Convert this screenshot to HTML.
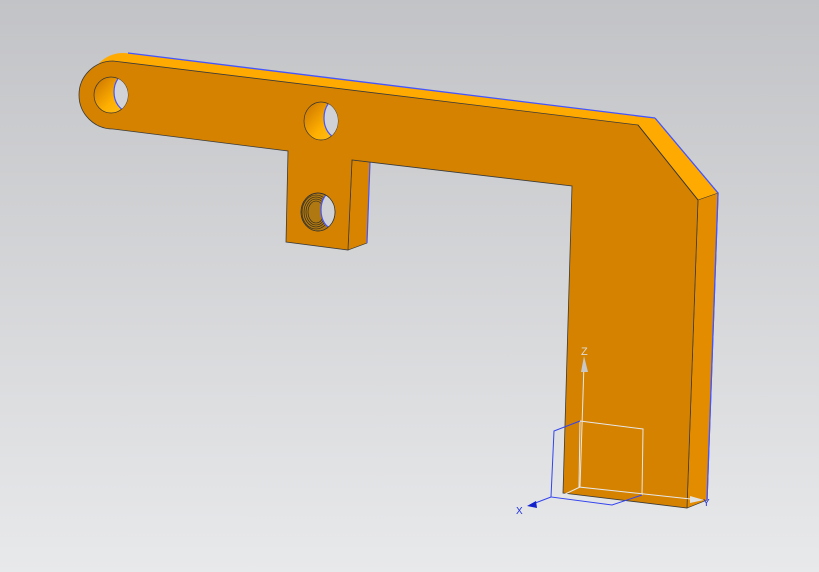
<!DOCTYPE html><html><head><style>html,body{margin:0;padding:0;width:819px;height:572px;overflow:hidden}</style></head><body>
<svg width="819" height="572" xmlns="http://www.w3.org/2000/svg">
<defs>
<linearGradient id="bg" x1="0" y1="0" x2="0" y2="1"><stop offset="0" stop-color="#c2c3c6"/><stop offset="1" stop-color="#e8e9eb"/></linearGradient>
<linearGradient id="hole" x1="0" y1="0" x2="1" y2="1"><stop offset="0" stop-color="#c87000"/><stop offset="0.6" stop-color="#ffb000"/><stop offset="1" stop-color="#ffc020"/></linearGradient>
</defs>
<rect width="819" height="572" fill="url(#bg)"/>
<path d="M128,53 L655,118 L718,193 L698,200 L638,125 L113,61 Z" fill="#ffaa00"/>
<ellipse cx="123" cy="88" rx="34" ry="35" fill="#ffaa00"/>
<path d="M655,118 L718,193 L707,500" fill="none" stroke="#4455ff" stroke-width="1.3"/>
<path d="M128,53 L655,118" fill="none" stroke="#4455ff" stroke-width="1.3"/>
<path d="M698,200 L718,193 L707,500 L687,508 Z" fill="#e48c00" stroke="#333" stroke-width="0.6"/>
<path d="M718,193 L707,500" stroke="#4455ff" stroke-width="1.3"/>
<path d="M352,160 L370,162 L367,243 L348,250 Z" fill="#d88400" stroke="#333" stroke-width="0.6"/>
<path d="M370,162 L367,243" stroke="#4455ff" stroke-width="1.2"/>
<path d="M113,61 L638,125 L698,200 L687,508 L563,493 L572,186 L352,160 L348,250 L286,242 L288,151 L113,129 A34,34 0 0 1 113,61 Z" fill="#d48200" stroke="#3a3a3a" stroke-width="0.8"/>
<path d="M638,125 L698,200" stroke="#333" stroke-width="0.8"/>
<g stroke="#333" stroke-width="0.7">
<ellipse cx="111" cy="95" rx="17" ry="18" fill="url(#hole)"/>
<ellipse cx="321" cy="121" rx="17" ry="19" fill="url(#hole)"/>
<ellipse cx="318" cy="212" rx="17" ry="19" fill="#b07810"/>
</g>
<clipPath id="c1"><ellipse cx="111" cy="95" rx="17" ry="18"/></clipPath>
<clipPath id="c2"><ellipse cx="321" cy="121" rx="17" ry="19"/></clipPath>
<clipPath id="c3"><ellipse cx="318" cy="212" rx="17" ry="19"/></clipPath>
<ellipse cx="128" cy="92" rx="14" ry="19" fill="#d2d3d6" stroke="#4455ff" stroke-width="1.2" clip-path="url(#c1)"/>
<ellipse cx="338" cy="118" rx="14" ry="20" fill="#d0d1d4" stroke="#4455ff" stroke-width="1.2" clip-path="url(#c2)"/>
<g clip-path="url(#c3)" stroke="#222" stroke-width="0.6" fill="none">
<ellipse cx="316" cy="212" rx="14" ry="17"/><ellipse cx="316" cy="212" rx="12" ry="15"/><ellipse cx="316" cy="212" rx="10" ry="13"/><ellipse cx="316" cy="212" rx="8" ry="11"/>
</g>
<ellipse cx="332" cy="210" rx="11" ry="18" fill="#d0d1d4" stroke="#4455ff" stroke-width="1.2" clip-path="url(#c3)"/>
<ellipse cx="318" cy="212" rx="17" ry="19" fill="none" stroke="#333" stroke-width="0.7"/>
<g fill="none" stroke="#e8e8e8" stroke-width="1">
<path d="M580,487 L584,364"/><path d="M580,421 L643,429 L642,495"/><path d="M580,421 L579,487 L700,500"/><path d="M561,496 L580,487"/>
</g>
<path d="M581,372 L584,356 L588,372 Z" fill="#c8c8c8"/>
<path d="M690,496 L704,500 L690,503 Z" fill="#e0e0e0"/>
<g fill="none" stroke="#3344ee" stroke-width="1">
<path d="M580,421 L554,431 L551,497 L612,505 L642,495"/><path d="M551,497 L530,505"/>
</g>
<path d="M527,506 L536,501 L537,508 Z" fill="#1122cc"/>
<text x="581" y="355" font-family="Liberation Sans,sans-serif" font-size="11" fill="#ddd">Z</text>
<text x="516" y="514" font-family="Liberation Sans,sans-serif" font-size="10" fill="#2233dd">X</text>
<text x="703" y="506" font-family="Liberation Sans,sans-serif" font-size="10" fill="#2233dd">Y</text>
</svg>
</body></html>
